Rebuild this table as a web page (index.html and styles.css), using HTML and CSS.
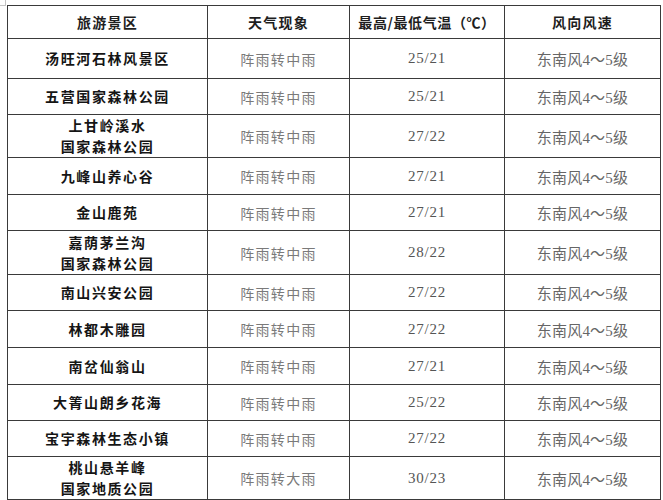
FILE: index.html
```html
<!DOCTYPE html>
<html lang="zh">
<head>
<meta charset="utf-8">
<title>旅游景区天气</title>
<link rel="stylesheet" href="styles.css">
</head>
<body>
<div class="page">
  <span class="corner-mark"></span>
  <table class="weather">
    <colgroup>
      <col class="c-name"><col class="c-wx"><col class="c-temp"><col class="c-wind">
    </colgroup>
    <thead>
      <tr class="h33">
        <th>旅游景区</th><th>天气现象</th><th>最高/最低气温（℃）</th><th>风向风速</th>
      </tr>
    </thead>
    <tbody>
      <tr class="h40"><td class="name">汤旺河石林风景区</td><td class="wx">阵雨转中雨</td><td class="temp">25/21</td><td class="wind">东南风4～5级</td></tr>
      <tr class="h36"><td class="name">五营国家森林公园</td><td class="wx">阵雨转中雨</td><td class="temp">25/21</td><td class="wind">东南风4～5级</td></tr>
      <tr class="h42"><td class="name">上甘岭溪水<br>国家森林公园</td><td class="wx">阵雨转中雨</td><td class="temp">27/22</td><td class="wind">东南风4～5级</td></tr>
      <tr class="h37"><td class="name">九峰山养心谷</td><td class="wx">阵雨转中雨</td><td class="temp">27/21</td><td class="wind">东南风4～5级</td></tr>
      <tr class="h36"><td class="name">金山鹿苑</td><td class="wx">阵雨转中雨</td><td class="temp">27/21</td><td class="wind">东南风4～5级</td></tr>
      <tr class="h44"><td class="name">嘉荫茅兰沟<br>国家森林公园</td><td class="wx">阵雨转中雨</td><td class="temp">28/22</td><td class="wind">东南风4～5级</td></tr>
      <tr class="h36"><td class="name">南山兴安公园</td><td class="wx">阵雨转中雨</td><td class="temp">27/22</td><td class="wind">东南风4～5级</td></tr>
      <tr class="h37"><td class="name">林都木雕园</td><td class="wx">阵雨转中雨</td><td class="temp">27/22</td><td class="wind">东南风4～5级</td></tr>
      <tr class="h37"><td class="name">南岔仙翁山</td><td class="wx">阵雨转中雨</td><td class="temp">27/21</td><td class="wind">东南风4～5级</td></tr>
      <tr class="h36"><td class="name">大箐山朗乡花海</td><td class="wx">阵雨转中雨</td><td class="temp">25/22</td><td class="wind">东南风4～5级</td></tr>
      <tr class="h36"><td class="name">宝宇森林生态小镇</td><td class="wx">阵雨转中雨</td><td class="temp">27/22</td><td class="wind">东南风4～5级</td></tr>
      <tr class="h42"><td class="name">桃山悬羊峰<br>国家地质公园</td><td class="wx">阵雨转大雨</td><td class="temp">30/23</td><td class="wind">东南风4～5级</td></tr>
    </tbody>
  </table>
</div>
</body>
</html>
```

FILE: styles.css
```css
html, body {
  margin: 0;
  padding: 0;
  background: #ffffff;
}

.page {
  position: relative;
  width: 663px;
  height: 500px;
  padding: 5px 0 0 7px;
  box-sizing: border-box;
  overflow: hidden;
}

.corner-mark {
  position: absolute;
  left: 0;
  top: 0;
  width: 5px;
  height: 5px;
  border-right: 1px solid #c4c4c4;
  border-bottom: 1px solid #c4c4c4;
}

.weather {
  border-collapse: collapse;
  table-layout: fixed;
  width: 653px;
  font-family: "Liberation Serif", "Noto Sans CJK SC", serif;
  text-spacing-trim: space-all;
}

.c-name { width: 200px; }
.c-wx { width: 142px; }
.c-temp { width: 155px; }
.c-wind { width: 156px; }

.weather th,
.weather td {
  border: 1px solid #3a3a3a;
  padding: 0;
  text-align: center;
  vertical-align: middle;
}

.weather th {
  font-family: "Noto Sans CJK SC", sans-serif;
  font-weight: 600;
  font-size: 14px;
  letter-spacing: 1.2px;
  color: #1e1e1e;
}

.weather th:nth-child(3) {
  letter-spacing: 0.6px;
}

.name {
  font-family: "Noto Sans CJK SC", sans-serif;
  font-weight: 600;
  font-size: 14px;
  letter-spacing: 1.6px;
  line-height: 21px;
  color: #151515;
}

.wx {
  font-family: "Noto Sans CJK SC", sans-serif;
  font-weight: 400;
  font-size: 14px;
  letter-spacing: 1.3px;
  color: #7a7a7a;
}

.temp {
  font-size: 15px;
  letter-spacing: 0.8px;
  color: #555555;
}

.wind {
  font-size: 15px;
  font-weight: 400;
  letter-spacing: 0.2px;
  color: #666666;
}

.h33 { height: 33px; }
.h36 { height: 36px; }
.h37 { height: 37px; }
.h40 { height: 40px; }
.h42 { height: 42px; }
.h44 { height: 44px; }
```
